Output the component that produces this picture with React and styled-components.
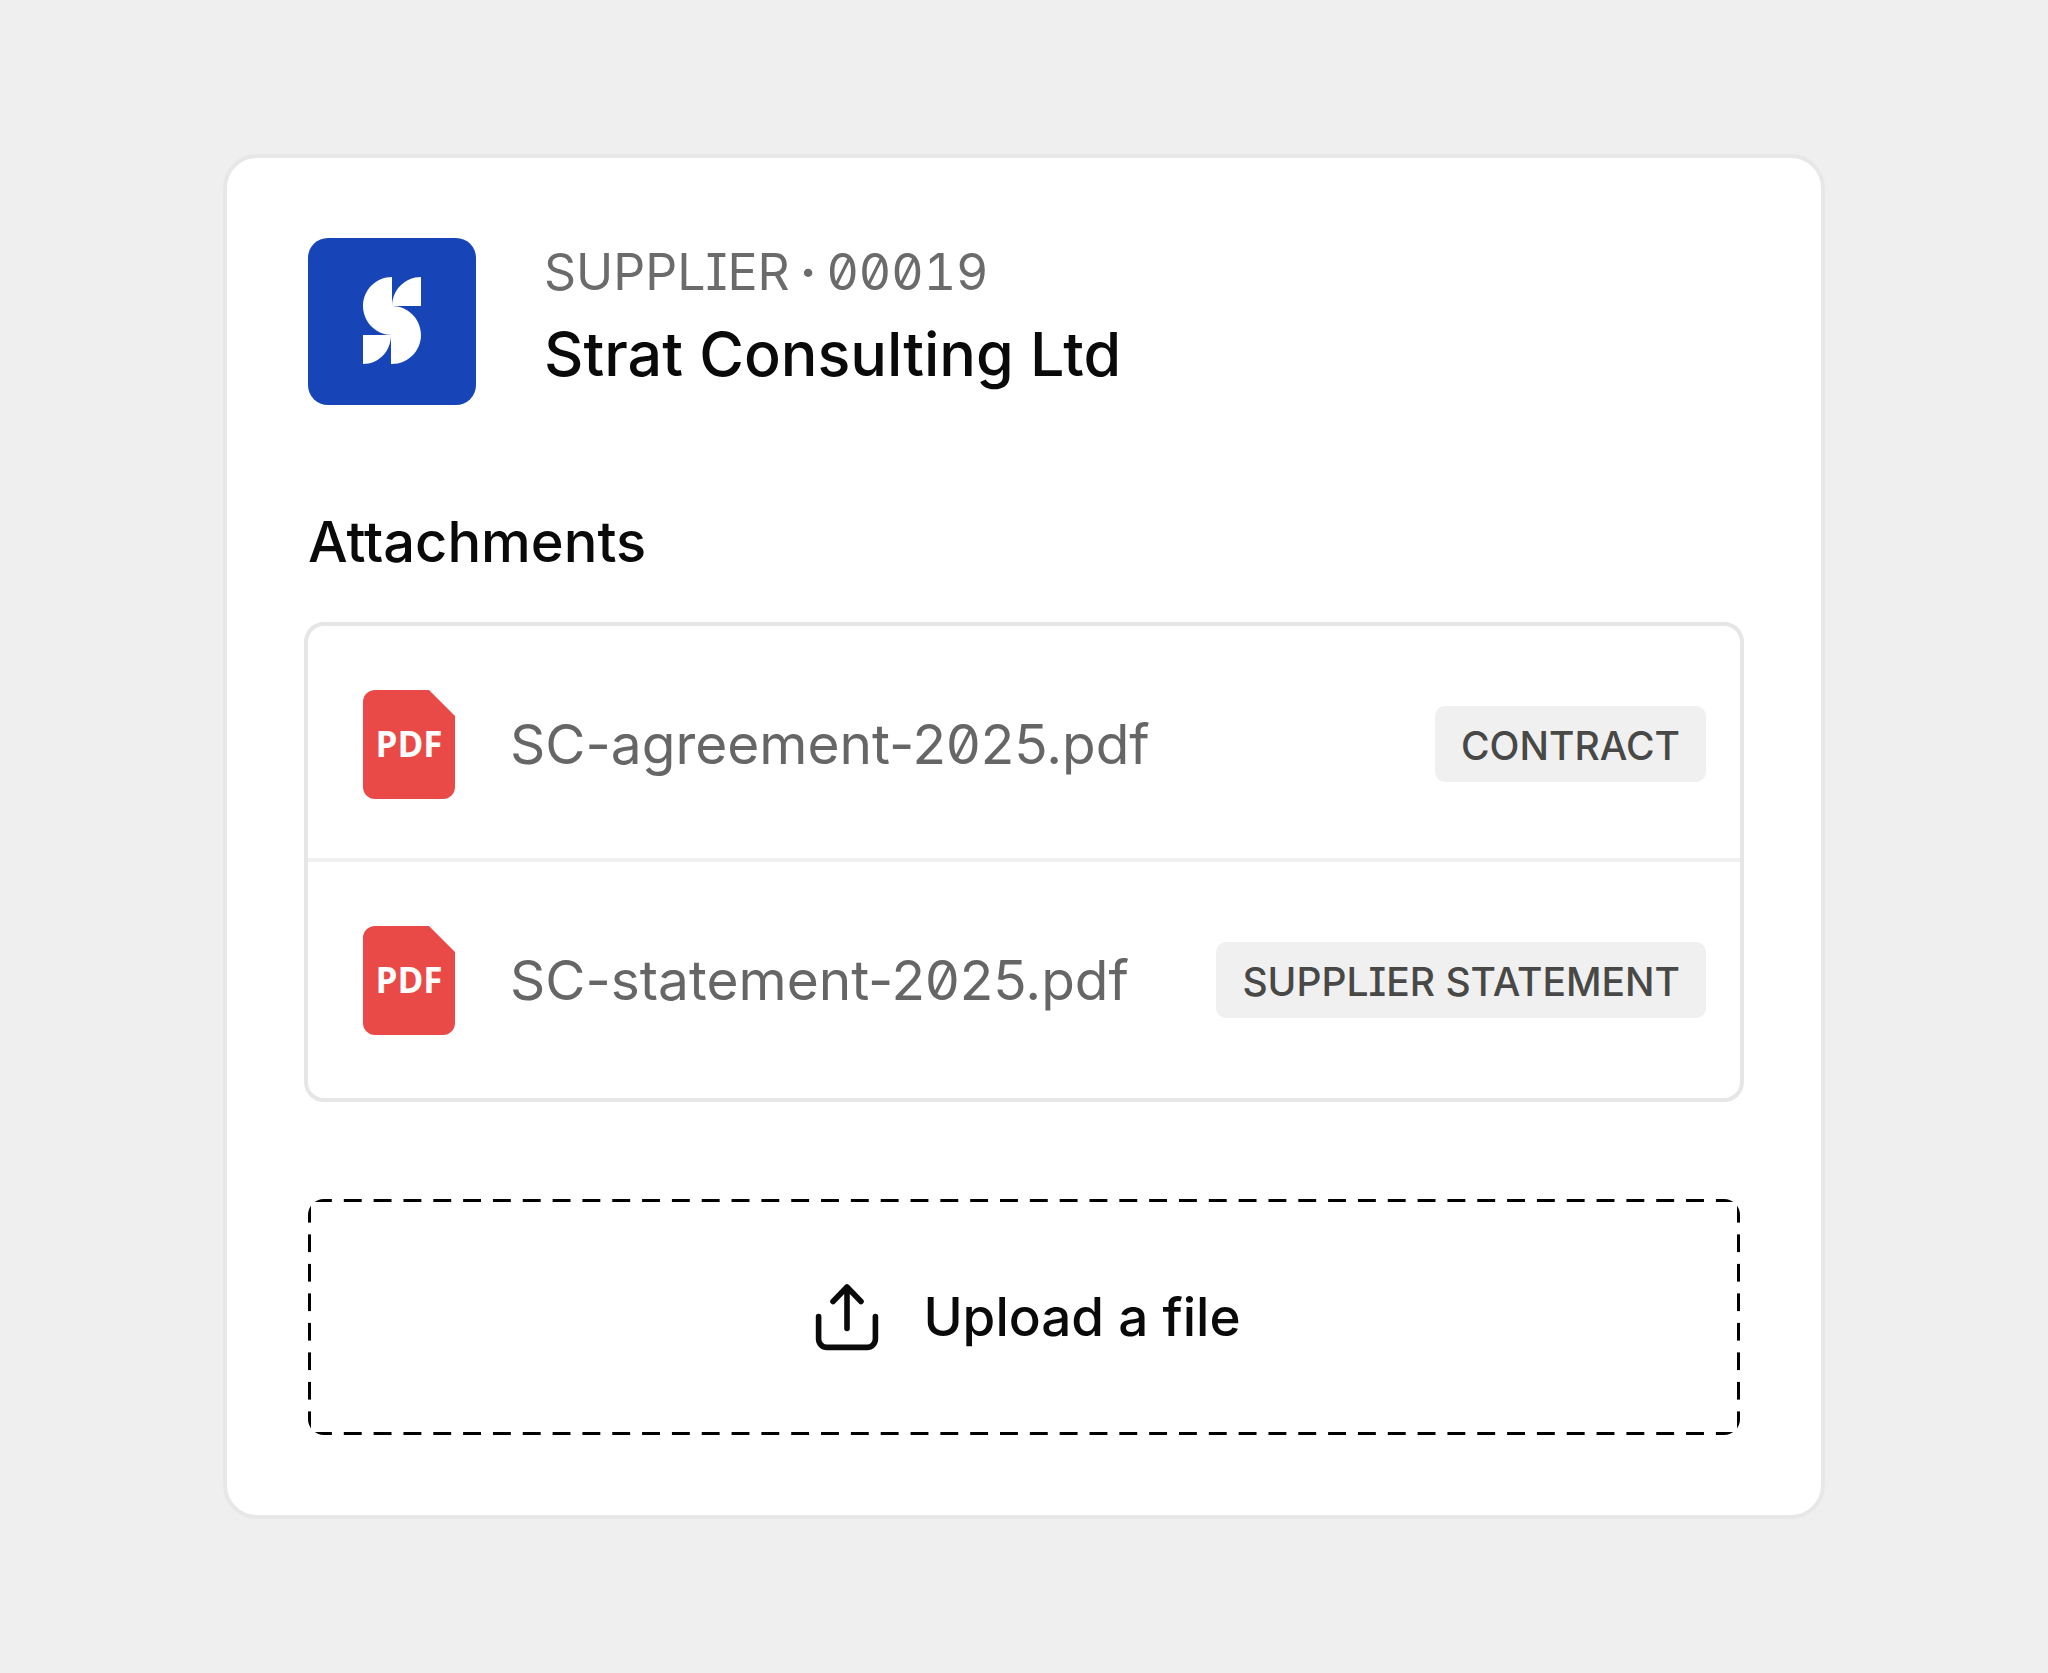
import React from "react";
import styled, { createGlobalStyle } from "styled-components";

const supplier = {
  number: "00019",
  name: "Strat Consulting Ltd",
};

const attachments = [
  { id: 1, name: "SC-agreement-2025.pdf", tag: "CONTRACT" },
  { id: 2, name: "SC-statement-2025.pdf", tag: "SUPPLIER STATEMENT" },
];

export default function App() {
  return (
    <>
      <GlobalStyle />
      <Page>
        <Card>
          <Header>
            <SupplierLogo />
            <div>
              <SupplierCode>
                SUPPLIER<Separator>·</Separator>
                {supplier.number}
              </SupplierCode>
              <SupplierName>{supplier.name}</SupplierName>
            </div>
          </Header>
          <SectionTitle>Attachments</SectionTitle>
          <FileList>
            {attachments.map((file) => (
              <FileRow key={file.id}>
                <PdfIcon />
                <FileName href={`#${file.name}`}>{file.name}</FileName>
                <Tag>{file.tag}</Tag>
              </FileRow>
            ))}
          </FileList>
          <UploadButton type="button">
            <UploadIcon />
            Upload a file
          </UploadButton>
        </Card>
      </Page>
    </>
  );
}

function SupplierLogo() {
  return (
    <Logo viewBox="0 0 168 167" aria-hidden="true">
      <rect width="168" height="167" rx="20" fill="#1745b8" />
      <g fill="#fff">
        <path d="M84 39v29c16 0 29 13 29 29s-13 29-29 29h-1V97h1c-16 0-29-13-29-29s13-29 29-29Z" />
        <path d="M84 68c0-16 13-29 29-29v29Z" />
        <path d="M83 97c0 16-12 29-28 29V97Z" />
      </g>
    </Logo>
  );
}

function PdfIcon() {
  return (
    <FileIcon viewBox="0 0 92 109" aria-hidden="true">
      <path
        d="M12 0h54l26 26v71a12 12 0 0 1-12 12H12A12 12 0 0 1 0 97V12A12 12 0 0 1 12 0Z"
        fill="#e94a47"
      />
      <text x="46" y="67" textAnchor="middle">
        PDF
      </text>
    </FileIcon>
  );
}

function UploadIcon() {
  return (
    <svg
      width="64"
      height="68"
      viewBox="0 0 64 68"
      fill="none"
      stroke="currentColor"
      strokeWidth="5.6"
      strokeLinecap="round"
      strokeLinejoin="round"
      aria-hidden="true"
    >
      <path d="M3.6 33.5V56a8.4 8.4 0 0 0 8.4 8.4h40a8.4 8.4 0 0 0 8.4-8.4V33.5" />
      <path d="M32 4v41.5M18 18.5 32 4l14 14.5" />
    </svg>
  );
}

const GlobalStyle = createGlobalStyle`
  * {
    box-sizing: border-box;
  }
  body {
    margin: 0;
    background-color: #efefef;
    color: #0a0a0a;
    font-family: Inter, sans-serif;
  }
`;

const Page = styled.main`
  padding: 154px 223px;
`;

const Card = styled.section`
  display: flex;
  flex-direction: column;
  padding: 80px 77px;
  background-color: #fff;
  border: 4px solid #e7e7e7;
  border-radius: 34px;
`;

const Header = styled.header`
  display: flex;
  align-items: center;
  gap: 68px;
  margin: 0 4px;
`;

const Logo = styled.svg`
  width: 168px;
  height: 167px;
  flex-shrink: 0;
`;

const SupplierCode = styled.p`
  margin: 0;
  color: #6b6b6b;
  font-size: 50px;
  line-height: 64px;
  font-feature-settings: "zero" 1, "tnum" 1, "cv08" 1;
`;

const Separator = styled.span`
  margin: 0 10px;
  font-weight: 700;
`;

const SupplierName = styled.h1`
  margin: 0;
  font-size: 61px;
  font-weight: 500;
  line-height: 100px;
`;

const SectionTitle = styled.h2`
  margin: 105px 4px 48px;
  font-size: 56px;
  font-weight: 500;
  line-height: 64px;
`;

const FileList = styled.ul`
  margin: 0;
  padding: 0;
  list-style: none;
  border: 4px solid #e6e6e6;
  border-radius: 20px;
`;

const FileRow = styled.li`
  display: flex;
  align-items: center;
  min-height: 236px;
  padding: 0 34px 0 55px;
  &:not(:last-child) {
    box-shadow: inset 0 -4px #f0f0f0;
  }
`;

const FileIcon = styled.svg`
  width: 92px;
  height: 109px;
  flex-shrink: 0;
  text {
    fill: #fff;
    font-family: "Open Sans", sans-serif;
    font-size: 35px;
    font-weight: 700;
  }
`;

const FileName = styled.a`
  flex: 1;
  margin-left: 55px;
  color: #666;
  font-size: 55px;
  line-height: 64px;
  text-decoration: none;
  font-feature-settings: "zero" 1;
`;

const Tag = styled.span`
  padding: 16px 26px 12px;
  background-color: #f0f0f0;
  border-radius: 10px;
  color: #484846;
  font-size: 39px;
  font-weight: 500;
  line-height: 48px;
  font-feature-settings: "cv08" 1;
`;

/* dashes are centred in each tile, "round" keeps the corners symmetric */
const UploadButton = styled.button`
  display: flex;
  align-items: center;
  justify-content: center;
  gap: 44px;
  min-height: 236px;
  margin: 97px 4px 0;
  padding: 0 0 0 8px;
  border: 0;
  border-radius: 16px;
  background-color: #fff;
  background-image:
    linear-gradient(90deg, transparent 21%, #000 21% 79%, transparent 79%),
    linear-gradient(90deg, transparent 21%, #000 21% 79%, transparent 79%),
    linear-gradient(transparent 21%, #000 21% 79%, transparent 79%),
    linear-gradient(transparent 21%, #000 21% 79%, transparent 79%);
  background-size: 30px 3px, 30px 3px, 3px 30px, 3px 30px;
  background-position: left top, left bottom, left top, right top;
  background-repeat: round no-repeat, round no-repeat, no-repeat round, no-repeat round;
  color: inherit;
  font-family: inherit;
  font-size: 53px;
  font-weight: 500;
  line-height: 64px;
  cursor: pointer;
`;
